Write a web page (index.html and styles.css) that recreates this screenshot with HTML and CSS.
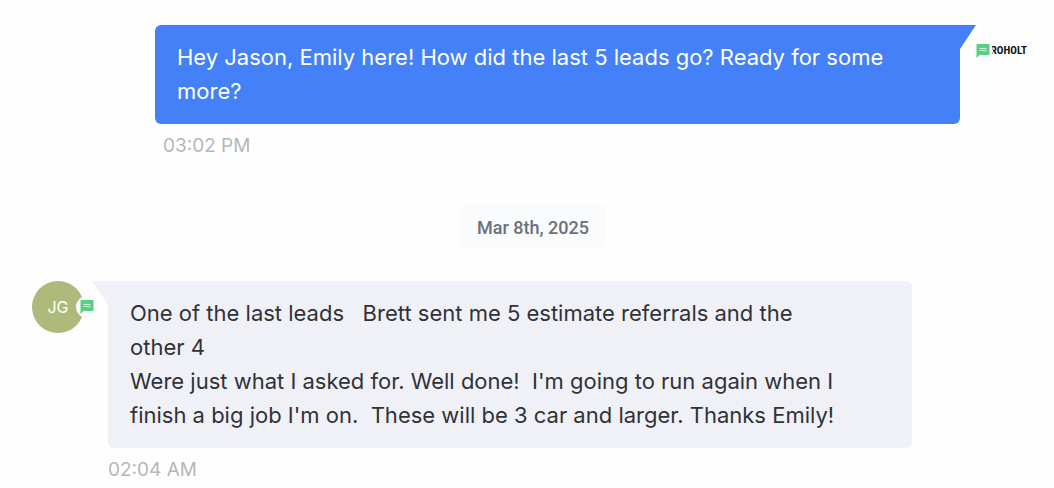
FILE: index.html
```html
<!DOCTYPE html>
<html lang="en">
<head>
    <meta charset="UTF-8">
    <meta name="viewport" content="width=device-width, initial-scale=1.0">
    <title>Conversation</title>
    <link rel="stylesheet" href="styles.css">
</head>
<body>

    <main class="conversation">

        <!-- Outgoing message -->
        <section class="message outgoing">
            <div class="message-body">
                <p class="bubble">Hey Jason, Emily here! How did the last 5 leads go? Ready for some more?</p>
                <time class="time">03:02 PM</time>
            </div>
            <div class="brand">
                <span class="brand-name">ROHOLT</span>
                <span class="badge">
                    <svg viewBox="0 0 14 14" width="14" height="14" aria-hidden="true">
                        <path fill="#58d081" d="M1.5 0h11q1 0 1 1v9q0 1-1 1H3.5L.5 14V1q0-1 1-1z"/>
                        <path stroke="#c4f3d2" d="M3.5 4.5h7M3.5 6.5h7"/>
                    </svg>
                </span>
            </div>
        </section>

        <div class="date">Mar 8th, 2025</div>

        <!-- Incoming message -->
        <section class="message incoming">
            <div class="avatar">
                JG
                <span class="badge">
                    <svg viewBox="0 0 14 14" width="14" height="14" aria-hidden="true">
                        <path fill="#58d081" d="M1.5 0h11q1 0 1 1v9q0 1-1 1H3.5L.5 14V1q0-1 1-1z"/>
                        <path stroke="#c4f3d2" d="M3.5 4.5h7M3.5 6.5h7"/>
                    </svg>
                </span>
            </div>
            <div class="message-body">
                <p class="bubble">One of the last leads   Brett sent me 5 estimate referrals and the other&nbsp;4
Were just what I asked for. Well done!  I'm going to run again when I finish a big job I'm on.  These will be 3 car and larger. Thanks Emily!</p>
                <time class="time">02:04 AM</time>
            </div>
        </section>

    </main>

</body>
</html>
```
FILE: styles.css
```css
* {
    box-sizing: border-box;
}
body {
    margin: 0;
    background: #fefefe;
    font-family: Inter, "Liberation Sans", sans-serif;
}
.conversation {
    display: flex;
    flex-direction: column;
    padding: 25px 20px 0 32px;
}
.message {
    display: flex;
}
.message-body {
    flex: 1;
}
.bubble {
    position: relative;
    margin: 0;
    padding: 15px 48px 16px 22px;
    border-radius: 6px;
    font-size: 22px;
    line-height: 34px;
    white-space: pre-wrap;
}
.bubble::before {
    content: "";
    position: absolute;
    top: 0;
    width: 16px;
    height: 24px;
}
.time {
    display: block;
    margin-top: 10px;
    color: #b5b7b9;
    font-size: 19px;
    line-height: 24px;
}

/* outgoing */
.outgoing {
    gap: 17px;
    margin-left: 123px;
    margin-right: 7px;
}
.outgoing .bubble {
    background: #4480f8;
    color: #fff;
    border-top-right-radius: 0;
}
.outgoing .bubble::before {
    left: 100%;
    background: #4480f8;
    clip-path: polygon(0 0, 100% 0, 0 100%);
}
.outgoing .time {
    margin-left: 8px;
}
.brand {
    position: relative;
    width: 50px;
    margin-top: 16px;
    text-align: right;
}
.brand-name {
    display: block;
    color: #111;
    font: bold 11px/20px "Liberation Sans Narrow", "Roboto Condensed", "Liberation Sans", sans-serif;
}

/* date between messages */
.date {
    align-self: center;
    margin: 46px 0 33px;
    padding: 4px 17px 0;
    border-radius: 6px;
    background: #f9fbfd;
    color: #687279;
    font: 500 18px/40px Roboto, sans-serif;
}

/* incoming */
.incoming {
    gap: 24px;
    margin-right: 122px;
}
.incoming .bubble {
    background: #f0f1f6;
    color: #303237;
    border-top-left-radius: 0;
}
.incoming .bubble::before {
    right: 100%;
    background: #f0f1f6;
    clip-path: polygon(0 0, 100% 0, 100% 100%);
}
.avatar {
    position: relative;
    width: 52px;
    height: 52px;
    border-radius: 50%;
    background: #adba7c;
    color: #fff;
    font-size: 16px;
    line-height: 52px;
    text-align: center;
}

/* sms badge */
.badge {
    position: absolute;
    display: flex;
    align-items: center;
    justify-content: center;
    width: 22px;
    height: 22px;
    border-radius: 50%;
    background: #f8fafc;
}
.avatar .badge {
    right: -14px;
    top: 15px;
}
.brand .badge {
    left: -4px;
    top: -1px;
    width: 20px;
}
```
